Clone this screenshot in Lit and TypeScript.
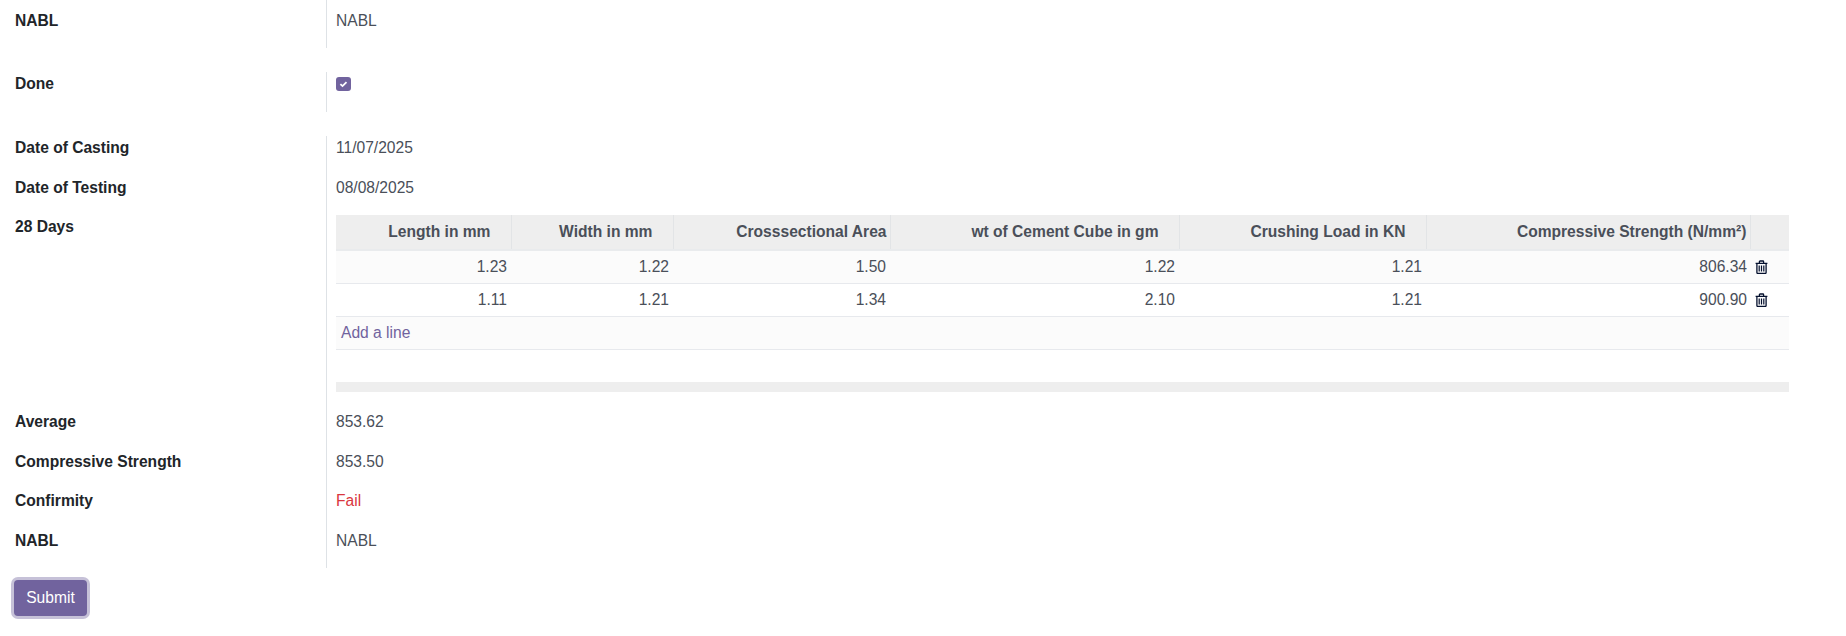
import { LitElement, html, css, svg } from "lit";
import { customElement } from "lit/decorators.js";

const trash = svg`<path d="M4.4 3.2V1.7c0-.4.3-.7.7-.7h2.8c.4 0 .7.3.7.7v1.5M.6 3.4h11.8M1.9 3.4v9c0 .8.4 1.1 1 1.1h7.2c.6 0 1-.3 1-1.1v-9" fill="none" stroke="#04102e" stroke-width="1.3"/><path d="M4.2 5.6v6M6.5 5.6v6M8.8 5.6v6" fill="none" stroke="#04102e" stroke-width="1.2"/>`;

const rows = [
  ["1.23", "1.22", "1.50", "1.22", "1.21", "806.34"],
  ["1.11", "1.21", "1.34", "2.10", "1.21", "900.90"],
];
const heads: [string, boolean][] = [
  ["Length in mm", true],
  ["Width in mm", true],
  ["Crosssectional Area", false],
  ["wt of Cement Cube in gm", true],
  ["Crushing Load in KN", true],
  ["Compressive Strength (N/mm²)", false],
];
const widths = [175, 162, 217, 289, 247, 324, 39];

@customElement("app-root")
export class AppRoot extends LitElement {
  static styles = css`
    :host { display: block; font-family: "Liberation Sans", Arial, sans-serif; font-size: 15.6px; line-height: 23.6px; color: #4a4f59; background: #fff; }
    .page { display: flex; flex-direction: column; height: 636px; overflow: hidden; }
    .group { display: grid; grid-template-columns: 326px 1fr; margin-bottom: 24px; }
    .group.mid { margin-bottom: 24.4px; }
    .group.last { margin-bottom: 0; }
    .label { padding-left: 15px; font-weight: 700; color: #212529; }
    .value { border-left: 1px solid #dee2e6; padding: 0 57px 16px 9px; min-width: 0; }
    .top { padding-top: 9px; padding-bottom: 15.4px; }
    .first-label { padding-top: 9px; }
    .checkwrap { height: 23.6px; }
    .check { display: block; width: 15px; height: 14px; padding-top: 5px; }
    .fail { color: #d9363e; }
    table { width: 100%; border-collapse: collapse; table-layout: fixed; line-height: 21.6px; }
    .tablewrap { padding-bottom: 1.8px; }
    thead th { background: #eeeeee; height: 35px; padding: 0 20px 0 4px; text-align: right; font-weight: 700; color: #4a4f59; box-sizing: border-box; border-right: 1px solid #e2e4e6; border-bottom: 2px solid #e9ebed; white-space: nowrap; }
    thead th.tight { padding-right: 3px; }
    thead th:last-child { border-right: 0; padding: 0; }
    tbody td { height: 33px; padding: 0 4px; box-sizing: border-box; text-align: right; border-bottom: 1px solid #e7e9ed; background: #fff; }
    tbody tr.odd td { background: #fbfbfb; }
    tbody td:nth-child(6) { padding-right: 3px; }
    tbody td.del { padding: 0 0 0 5px; text-align: left; }
    td.del svg { display: block; width: 13px; height: 14px; }
    tbody td.add { text-align: left; color: #71639e; padding-left: 5px; }
    tbody tr.blank td { border-bottom: 0; }
    tfoot td { height: 10px; padding: 0; background: #eeeeee; }
    .submit { align-self: flex-start; margin: 11.6px 0 0 14px; height: 36px; width: 73px; box-sizing: border-box; border: 0; border-radius: 4px; background: #71639e; color: #fff; font: 15.6px/21.6px "Liberation Sans", Arial, sans-serif; box-shadow: 0 0 0 3px #c6c1d8; padding: 0; }
  `;

  private row(label: string, value: unknown) {
    return html`<div class="label">${label}</div><div class="value">${value}</div>`;
  }

  render() {
    return html`<div class="page">
      <div class="group">
        <div class="label first-label">NABL</div><div class="value top">NABL</div>
      </div>
      <div class="group mid">
        ${this.row("Done", html`<div class="checkwrap"><svg class="check" viewBox="0 0 15 14"><rect width="15" height="14" rx="3" fill="#71639e"/><path d="M4.4 7.2l2.1 1.9 4-4" fill="none" stroke="#fff" stroke-width="1.8"/></svg></div>`)}
      </div>
      <div class="group last">
        ${this.row("Date of Casting", "11/07/2025")}
        ${this.row("Date of Testing", "08/08/2025")}
        ${this.row("28 Days", html`<div class="tablewrap"><table>
          <colgroup>${widths.map((w) => html`<col style="width:${w}px">`)}</colgroup>
          <thead><tr>${heads.map(([h, sortable]) => html`<th class=${sortable ? "" : "tight"}>${h}</th>`)}<th></th></tr></thead>
          <tbody>
            ${rows.map((r, i) => html`<tr class=${i % 2 === 0 ? "odd" : ""}>${r.map((c) => html`<td>${c}</td>`)}<td class="del"><svg viewBox="0 0 13 14">${trash}</svg></td></tr>`)}
            <tr class="odd"><td class="add" colspan="7">Add a line</td></tr>
            <tr class="blank"><td colspan="7"></td></tr>
          </tbody>
          <tfoot><tr><td colspan="7"></td></tr></tfoot>
        </table></div>`)}
        ${this.row("Average", "853.62")}
        ${this.row("Compressive Strength", "853.50")}
        ${this.row("Confirmity", html`<span class="fail">Fail</span>`)}
        ${this.row("NABL", "NABL")}
      </div>
      <button class="submit">Submit</button>
    </div>`;
  }
}
